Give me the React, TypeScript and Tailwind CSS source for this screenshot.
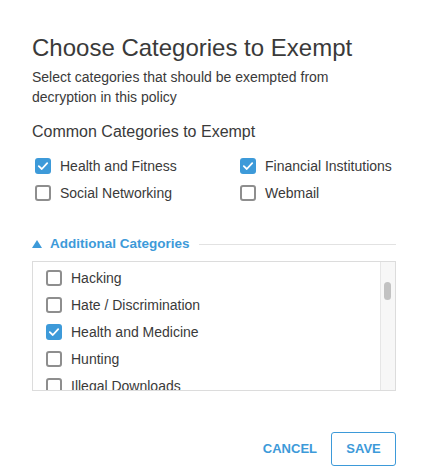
import React from "react";

const Check = ({ checked }: { checked: boolean }) =>
  checked ? (
    <span className="flex h-4 w-4 shrink-0 items-center justify-center rounded-[3px] bg-[#3d9ad9]">
      <svg viewBox="0 0 16 16" className="h-4 w-4" fill="none">
        <path d="M3.8 8.2 L6.8 11 L12.2 5.2" stroke="white" strokeWidth="1.8" strokeLinecap="round" strokeLinejoin="round" />
      </svg>
    </span>
  ) : (
    <span className="block h-4 w-4 shrink-0 rounded-[3px] border-2 border-[#8e8e8e] bg-white" />
  );

const Item = ({ label, checked }: { label: string; checked: boolean }) => (
  <div className="flex h-4 items-center gap-[9px] text-[14px] leading-[16px] text-[#3a3a3a]">
    <Check checked={checked} />
    <span className="whitespace-nowrap">{label}</span>
  </div>
);

export default function App() {
  const extra = [
    { l: "Hacking", c: false },
    { l: "Hate / Discrimination", c: false },
    { l: "Health and Medicine", c: true },
    { l: "Hunting", c: false },
    { l: "Illegal Downloads", c: false },
  ];
  return (
    <div
      className="h-[473px] w-[426px] bg-white pl-8 pr-[30px] pt-[33px] text-[#333]"
      style={{ fontFamily: '"Liberation Sans", Arial, sans-serif' }}
    >
      <h1 className="text-[24px] leading-[30px] text-[#3a3a3a]">Choose Categories to Exempt</h1>
      <p className="mt-[4px] text-[14px] leading-[20px] text-[#3a3a3a]">
        Select categories that should be exempted from
        <br />
        decryption in this policy
      </p>
      <h2 className="mt-[14px] text-[16px] leading-[22px] text-[#3a3a3a]">Common Categories to Exempt</h2>
      <div className="mt-[15px] grid grid-cols-[205px_1fr] gap-y-[11px] pl-[3px]">
        <Item label="Health and Fitness" checked />
        <Item label="Financial Institutions" checked />
        <Item label="Social Networking" checked={false} />
        <Item label="Webmail" checked={false} />
      </div>
      <div className="mt-[35px] flex items-center">
        <svg viewBox="0 0 10 8" className="h-[8px] w-[10px]">
          <path d="M5 0 L10 8 L0 8 Z" fill="#3d9ad9" />
        </svg>
        <span className="ml-[8px] text-[13.5px] font-bold leading-[16px] text-[#3d9ad9]">Additional Categories</span>
        <div className="ml-[9px] h-px flex-1 bg-[#e2e2e2]" />
      </div>
      <div className="mt-[9px] flex h-[130px] border border-[#dcdcdc]">
        <div className="flex-1 overflow-hidden pl-[13px] pt-[8px]">
          <div className="flex flex-col gap-[11px]">
            {extra.map((e) => (
              <Item key={e.l} label={e.l} checked={e.c} />
            ))}
          </div>
        </div>
        <div className="relative w-[15px] border-l border-[#e6e6e6] bg-[#f7f7f7]">
          <div className="absolute left-[3px] top-[20px] h-[18px] w-[7px] rounded-full bg-[#c2c2c2]" />
        </div>
      </div>
      <div className="mt-[41px] flex items-center justify-end gap-[14px]">
        <button className="px-0 text-[13px] font-bold text-[#3d9ad9]">CANCEL</button>
        <button className="h-[34px] w-[65px] rounded-[3px] border border-[#3d9ad9] text-[13px] font-bold text-[#3d9ad9]">
          SAVE
        </button>
      </div>
    </div>
  );
}
